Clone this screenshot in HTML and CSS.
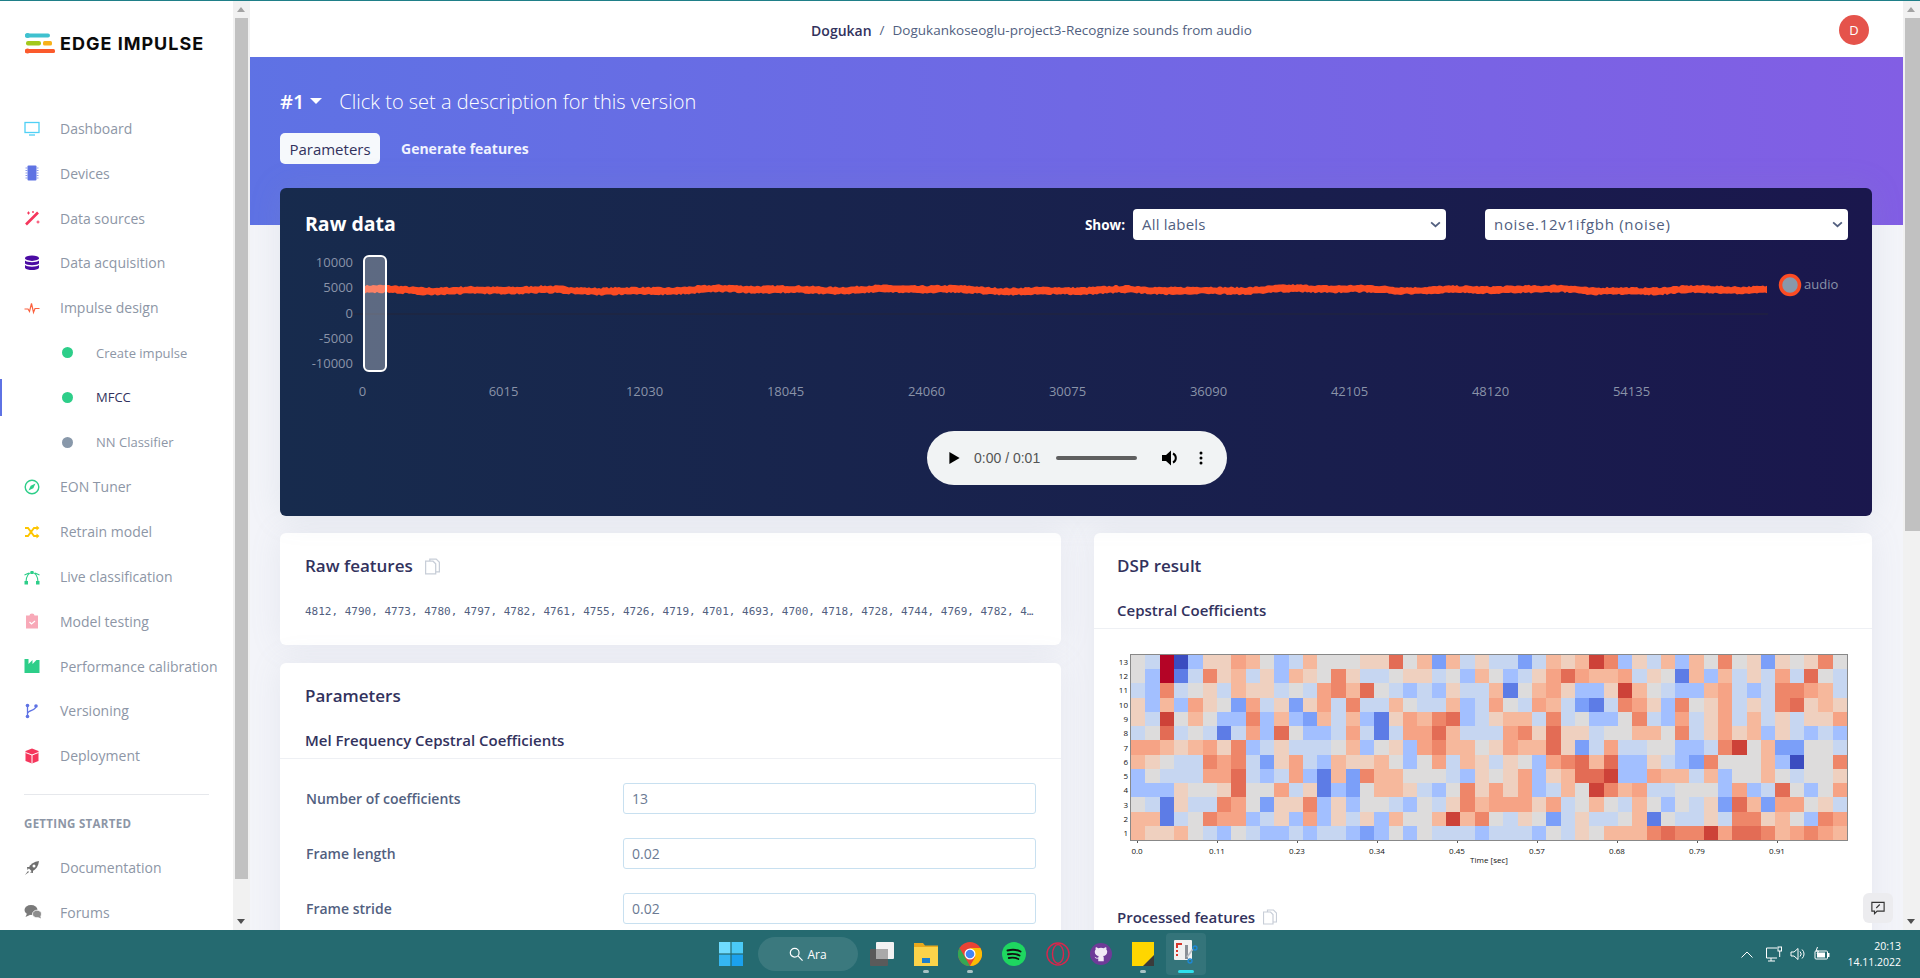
FILE: index.html
```html
<!DOCTYPE html>
<html lang="en">
<head>
<meta charset="utf-8">
<title>Edge Impulse</title>
<link rel="stylesheet" href="styles.css">
</head>
<body>
<div class="app">
  <aside class="sidebar">
    <div class="side-inner">
      <div class="logo">
        <svg class="logo-mark" viewBox="0 0 30 21" width="30" height="21">
          <rect x="0" y="0.5" width="25" height="4" rx="2" fill="#3fc1cf"/>
          <circle cx="2.5" cy="2.5" r="2.5" fill="#3fc1cf"/>
          <rect x="1" y="8" width="15" height="4.5" rx="2" fill="#a3c81c"/>
          <rect x="18" y="8" width="9" height="4.5" rx="1.5" fill="#f7b11a"/>
          <rect x="0" y="16" width="30" height="4" rx="1.5" fill="#fb5a2c"/>
          <circle cx="2.5" cy="18" r="2.5" fill="#fb5a2c"/>
        </svg>
        <span class="logo-text">EDGE IMPULSE</span>
      </div>
      <nav class="nav">
        <a class="nav-item"><svg class="ico" viewBox="0 0 16 16"><rect x="1" y="1.5" width="14" height="10" fill="none" stroke="#4fd0f5" stroke-width="1.3"/><path d="M5 14h6" stroke="#4fd0f5" stroke-width="1.3"/></svg>Dashboard</a>
        <a class="nav-item"><svg class="ico" viewBox="0 0 16 16"><rect x="3.5" y="0.5" width="9" height="15" rx="1" fill="#5f73e3"/><path d="M1.5 3h2M1.5 5.500h2M1.500 8h2M1.500 10.500h2M1.500 13h2M12.500 3h2M12.500 5.500h2M12.500 8h2M12.500 10.500h2M12.500 13h2" stroke="#8d9bea" stroke-width="1"/></svg>Devices</a>
        <a class="nav-item"><svg class="ico" viewBox="0 0 16 16"><path d="M2 14.500 14 2.500" stroke="#f5365c" stroke-width="2.600"/><path d="M3 3h3M4.500 1.500v3M12.500 12h3M14 10.500v3" stroke="#f5365c" stroke-width="1"/><circle cx="9" cy="2" r="0.900" fill="#f5365c"/></svg>Data sources</a>
        <a class="nav-item"><svg class="ico" viewBox="0 0 16 16"><ellipse cx="8" cy="3.200" rx="7" ry="2.700" fill="#4b0ba3"/><path d="M1 5.500c2 2.200 12 2.200 14 0v3c-2 2.200-12 2.200-14 0zM1 10c2 2.200 12 2.200 14 0v3c-2 2.800-12 2.800-14 0z" fill="#4b0ba3"/></svg>Data acquisition</a>
        <a class="nav-item"><svg class="ico" viewBox="0 0 16 16"><path d="M0.500 9h3.500l1.500 2.500 2-8 2 9 1.500-4h4.500" fill="none" stroke="#fb6340" stroke-width="1.200"/></svg>Impulse design</a>
        <a class="nav-item sub"><i class="dot green"></i>Create impulse</a>
        <a class="nav-item sub active"><i class="dot green"></i>MFCC</a>
        <a class="nav-item sub"><i class="dot grey"></i>NN Classifier</a>
        <a class="nav-item"><svg class="ico" viewBox="0 0 16 16"><circle cx="8" cy="8" r="6.800" fill="none" stroke="#2dce89" stroke-width="1.400"/><path d="M11.500 4.500 9.300 9.300 4.500 11.500 6.700 6.700z" fill="#2dce89"/></svg>EON Tuner</a>
        <a class="nav-item"><svg class="ico" viewBox="0 0 16 16"><path d="M1 4h3l6 8h3M1 12h3l6-8h3" fill="none" stroke="#fdc500" stroke-width="1.900"/><path d="m12.500 1.500 3 2.500-3 2.500zM12.500 9.500l3 2.500-3 2.500z" fill="#fdc500"/></svg>Retrain model</a>
        <a class="nav-item"><svg class="ico" viewBox="0 0 16 16"><path d="M2 13C2 7 5 3.500 8 3.500S14 7 14 13M0.500 6 5 4M15.500 6 11 4" fill="none" stroke="#2dce89" stroke-width="1.100"/><rect x="0.500" y="12" width="3.500" height="3.500" fill="#2dce89"/><rect x="12" y="12" width="3.500" height="3.500" fill="#2dce89"/><rect x="6.500" y="2" width="3" height="3" fill="#2dce89"/></svg>Live classification</a>
        <a class="nav-item"><svg class="ico" viewBox="0 0 16 16"><path d="M2 2.500h3.500a2.500 2 0 0 1 5 0H14V15.500H2z" fill="#f8a9b8"/><path d="m5.500 9 2 2 3.500-3" fill="none" stroke="#fff" stroke-width="1.200"/></svg>Model testing</a>
        <a class="nav-item"><svg class="ico" viewBox="0 0 16 16"><path d="M0.500 15V1h4v5l4-4v4l4-4 3 0V15z" fill="#2dce89"/></svg>Performance calibration</a>
        <a class="nav-item"><svg class="ico" viewBox="0 0 16 16"><path d="M3.500 3v10M12 3.500c0 4-8 3.500-8.500 7" fill="none" stroke="#5e72e4" stroke-width="1.300"/><circle cx="3.500" cy="2.500" r="1.800" fill="#5e72e4"/><circle cx="3.500" cy="13.500" r="1.800" fill="#5e72e4"/><circle cx="12" cy="3" r="1.800" fill="#5e72e4"/></svg>Versioning</a>
        <a class="nav-item"><svg class="ico" viewBox="0 0 16 16"><path d="M8 0.500 14.500 3v10L8 15.500 1.500 13V3z" fill="#f5365c"/><path d="M1.500 4.500 8 7l6.500-2.500M8 7v8.500" fill="none" stroke="#fff" stroke-width="1"/></svg>Deployment</a>
        <div class="divider"></div>
        <div class="nav-head">GETTING STARTED</div>
        <a class="nav-item"><svg class="ico" viewBox="0 0 16 16"><path d="M15 1C10 1.500 6.500 4 4.500 8l3.500 3.500C12 9.500 14.500 6 15 1z" fill="#6f6f6f"/><circle cx="10" cy="6" r="1.500" fill="#fff"/><path d="M3 7h3L3.500 10zM9 13v-3l-3 2.500zM1 15l3-4 1 1z" fill="#6f6f6f"/></svg>Documentation</a>
        <a class="nav-item"><svg class="ico chat" viewBox="0 0 18 16"><ellipse cx="7" cy="6" rx="6.500" ry="5" fill="#7a7a7a"/><path d="M3 9.500 1.500 13 7 10.500z" fill="#7a7a7a"/><ellipse cx="13" cy="10" rx="4.500" ry="3.800" fill="#8d8d8d" stroke="#fff" stroke-width="0.800"/><path d="m14 13 3 1.500-1-3z" fill="#8d8d8d"/></svg>Forums</a>
      </nav>
    </div>
    <div class="scrollbar side-scroll"><span class="arrow up"></span><span class="thumb"></span><span class="arrow down"></span></div>
  </aside>

  <div class="content">
    <main class="main">
      <header class="topbar">
        <div class="crumbs"><b>Dogukan</b><span class="sep">/</span><span>Dogukankoseoglu-project3-Recognize sounds from audio</span></div>
        <span class="avatar">D</span>
      </header>
      <section class="hero">
        <div class="version"><span class="ver-no">#1</span><span class="caret"></span><span class="ver-desc">Click to set a description for this version</span></div>
        <div class="tabs"><a class="tab on">Parameters</a><a class="tab">Generate features</a></div>
      </section>
      <div class="body">
        <section class="raw">
          <div class="raw-head">
            <h2>Raw data</h2>
            <div class="raw-controls">
              <label class="show">Show:</label>
              <div class="select s1"><span>All labels</span><svg viewBox="0 0 12 8" width="11" height="7"><path d="m1 1.500 5 4.500 5-4.500" fill="none" stroke="#525f7f" stroke-width="2"/></svg></div>
              <div class="select s2"><span>noise.12v1ifgbh (noise)</span><svg viewBox="0 0 12 8" width="11" height="7"><path d="m1 1.500 5 4.500 5-4.500" fill="none" stroke="#525f7f" stroke-width="2"/></svg></div>
            </div>
          </div>
          <svg id="chart" class="chart" width="1592" height="150" viewBox="0 0 1592 150"></svg>
          <div class="player">
            <svg class="pl-play" viewBox="0 0 12 14" width="11" height="12"><path d="M0 0 12 7 0 14z" fill="#000"/></svg>
            <span class="pl-time">0:00 / 0:01</span>
            <span class="pl-bar"></span>
            <svg class="pl-vol" viewBox="0 0 16 16" width="16" height="16"><path d="M0 5h4l5-4.500v15L4 11H0z" fill="#000"/><path d="M11 3.500a5 5 0 0 1 0 9" fill="none" stroke="#000" stroke-width="2"/></svg>
            <svg class="pl-more" viewBox="0 0 4 14" width="4" height="14"><circle cx="2" cy="2" r="1.500"/><circle cx="2" cy="7" r="1.500"/><circle cx="2" cy="12" r="1.500"/></svg>
          </div>
        </section>
        <div class="cols">
          <div class="col left">
            <section class="card features">
              <h3 class="card-title">Raw features <svg class="copy" viewBox="0 0 14 16" width="15" height="17"><path d="M4.500 3V1h6l3 3v9h-3M0.500 3h7l2.500 2.500V15H.5z" fill="none" stroke="#c8ced8" stroke-width="1.200"/></svg></h3>
              <p class="mono">4812, 4790, 4773, 4780, 4797, 4782, 4761, 4755, 4726, 4719, 4701, 4693, 4700, 4718, 4728, 4744, 4769, 4782, 4…</p>
            </section>
            <section class="card params">
              <h3 class="card-title">Parameters</h3>
              <h4 class="card-sub">Mel Frequency Cepstral Coefficients</h4>
              <div class="rows">
                <div class="row"><label>Number of coefficients</label><div class="input">13</div></div>
                <div class="row"><label>Frame length</label><div class="input">0.02</div></div>
                <div class="row"><label>Frame stride</label><div class="input">0.02</div></div>
              </div>
            </section>
          </div>
          <section class="card dsp">
            <h3 class="card-title">DSP result</h3>
            <h4 class="card-sub">Cepstral Coefficients</h4>
            <div class="plot">
              <div class="plot-y" id="ylabels"></div>
              <div class="plot-main">
                <div class="heat" id="heat"></div>
                <div class="plot-x"><span>0.0</span><span>0.11</span><span>0.23</span><span>0.34</span><span>0.45</span><span>0.57</span><span>0.68</span><span>0.79</span><span>0.91</span></div>
                <div class="plot-label">Time [sec]</div>
              </div>
            </div>
            <h3 class="proc">Processed features <svg class="copy" viewBox="0 0 14 16" width="14" height="16"><path d="M4.500 3V1h6l3 3v9h-3M0.500 3h7l2.500 2.500V15H.5z" fill="none" stroke="#c8ced8" stroke-width="1.200"/></svg></h3>
          </section>
        </div>
      </div>
      <button class="feedback"><svg viewBox="0 0 16 16" width="14" height="14"><path d="M1 1.500h14v10H7l-3 3v-3H1z" fill="none" stroke="#333" stroke-width="1.300"/><path d="m6 8 4-4" stroke="#333" stroke-width="1.300"/></svg></button>
    </main>
    <div class="scrollbar main-scroll"><span class="arrow up"></span><span class="thumb"></span><span class="arrow down"></span></div>
  </div>
</div>

<footer class="taskbar">
  <div class="tb-center">
    <svg class="tb-ico" viewBox="0 0 24 24" width="24" height="24"><rect width="11.400" height="11.400" fill="#6fdcff"/><rect x="12.600" width="11.400" height="11.400" fill="#4bcaf7"/><rect y="12.600" width="11.400" height="11.400" fill="#35b6f2"/><rect x="12.600" y="12.600" width="11.400" height="11.400" fill="#1ba1ee"/></svg>
    <div class="tb-search"><svg viewBox="0 0 16 16" width="14" height="14"><circle cx="6.500" cy="6.500" r="5" fill="none" stroke="#fff" stroke-width="1.400"/><path d="m10.500 10.500 5 5" stroke="#fff" stroke-width="1.400"/></svg>Ara</div>
    <svg class="tb-ico" viewBox="0 0 24 24" width="24" height="24"><rect y="7" width="18" height="17" rx="1" fill="#5a5a5a"/><rect x="6" y="0" width="18" height="17" rx="1" fill="#f2f2f2"/><rect x="6" y="7" width="12" height="10" fill="#a9a9a9"/></svg>
    <span class="tb-slot"><svg viewBox="0 0 24 24" width="24" height="24"><path d="M0 1h9l2 2.500h13V22H0z" fill="#e9a91c"/><rect y="5" width="24" height="19" fill="#fcd34a"/><path d="M8 16h8v5H8z" fill="#1d7fcd"/></svg><i class="pip"></i></span>
    <span class="tb-slot"><svg viewBox="0 0 24 24" width="24" height="24"><circle cx="12" cy="12" r="12" fill="#ea4335"/><path d="M12 24A12 12 0 0 1 1.600 6l5.200 9z" fill="#34a853"/><path d="M12 24a12 12 0 0 0 10.400-18L12 6l5.200 9z" fill="#fbbc05"/><circle cx="12" cy="12" r="5.500" fill="#fff"/><circle cx="12" cy="12" r="4.300" fill="#4285f4"/></svg><i class="pip"></i></span>
    <svg class="tb-ico" viewBox="0 0 24 24" width="24" height="24"><circle cx="12" cy="12" r="12" fill="#1ed760"/><path d="M5.500 8.500c4-1 9-1 13 1M6 12.300c4-.8 8-.6 11.500 1.200M6.800 16c3-.6 6.500-.5 9.500 1" fill="none" stroke="#111" stroke-width="1.900" stroke-linecap="round"/></svg>
    <svg class="tb-ico" viewBox="0 0 24 24" width="24" height="24"><circle cx="12" cy="12" r="11" fill="none" stroke="#d8264c" stroke-width="1.400"/><ellipse cx="12" cy="12" rx="5.500" ry="9.500" fill="none" stroke="#d8264c" stroke-width="1.400"/></svg>
    <svg class="tb-ico" viewBox="0 0 24 24" width="22" height="24"><circle cx="12" cy="12" r="12" fill="#6e3b98"/><path d="M9 20v-3c-3 .6-3.500-1.400-4-2 1 0 1.800 1.600 4 1 0-1 .3-1.400.7-1.800-2.500-.4-4.500-1.500-4.500-4.700 0-1 .4-1.800 1-2.500-.2-.6-.3-1.500.1-2.500 1 0 2 .6 2.700 1.100a9 9 0 0 1 6 0c.7-.5 1.700-1.100 2.700-1.100.4 1 .3 1.900.1 2.500.6.700 1 1.500 1 2.500 0 3.200-2 4.300-4.500 4.700.5.500.7 1.100.7 1.900V20z" fill="#f0e9f5"/></svg>
    <span class="tb-slot"><svg viewBox="0 0 22 24" width="22" height="24"><rect width="22" height="24" fill="#ffd600"/><path d="M11 24 22 13v11z" fill="#3b3b3b"/></svg><i class="pip"></i></span>
    <span class="tb-active"><svg viewBox="0 0 24 24" width="24" height="24"><rect width="18" height="20" rx="1" fill="#f1f1f1"/><path d="M2 3h6v2H4v3H2zM2 10h2v2H2zM2 14h2v2H2z" fill="#d9362a"/><rect x="11" y="5" width="3" height="14" fill="#8a8f96"/><path d="m13 17 6-8" stroke="#b7bdc4" stroke-width="1.500"/><circle cx="21" cy="8" r="2" fill="none" stroke="#1e88d6" stroke-width="1.300"/><circle cx="16" cy="21" r="2" fill="none" stroke="#1e88d6" stroke-width="1.300"/></svg><i class="pip-on"></i></span>
  </div>
  <div class="tray">
    <svg viewBox="0 0 12 7" width="12" height="7"><path d="m.5 6.500 5.500-5.500 5.500 5.500" fill="none" stroke="#fff" stroke-width="1"/></svg>
    <svg viewBox="0 0 16 16" width="16" height="16"><path d="M11 2H.5v10H11M5 12v3M2 15h7" fill="none" stroke="#fff" stroke-width="1"/><rect x="12" y="1" width="3.500" height="4" fill="none" stroke="#fff"/><path d="M13.700 5v6" stroke="#fff"/></svg>
    <svg viewBox="0 0 16 16" width="16" height="16"><path d="M1 6h3l4-3.500v11L4 10H1z" fill="none" stroke="#fff" stroke-width="1"/><path d="M10 5.500a3.500 3.500 0 0 1 0 5M12 3.500a6 6 0 0 1 0 9" fill="none" stroke="#fff" stroke-width="1"/></svg>
    <svg viewBox="0 0 16 16" width="16" height="16"><rect x="1" y="5" width="12.500" height="8" rx="1" fill="none" stroke="#fff" stroke-width="1"/><rect x="3" y="6.500" width="8" height="5" fill="#fff"/><rect x="14" y="7" width="1.500" height="4" fill="#fff"/><path d="M3.500 1 2 5h2.500L3 8" fill="none" stroke="#fff" stroke-width="1"/></svg>
    <div class="clock"><span>20:13</span><span>14.11.2022</span></div>
  </div>
</footer>
<script src="app.js"></script>
</body>
</html>
```
FILE: styles.css
```css
* { box-sizing: border-box; }
html, body { margin: 0; height: 100%; overflow: hidden; }
body { font-family: "Open Sans", sans-serif; font-size: 14px; color: #525f7f; background: #fff; display: flex; flex-direction: column; height: 978px; border-top: 1px solid #1f7f88; }
h2, h3, h4, p { margin: 0; }

.app { flex: 0 0 929px; display: flex; min-height: 0; }

.sidebar { flex: 0 0 250px; display: flex; background: #fff; }
.side-inner { flex: 1; min-width: 0; position: relative; }
.logo { display: flex; align-items: center; gap: 5px; padding: 32px 0 0 25px; height: 53px; }
.logo-text { font-family: "Inter", sans-serif; font-weight: 700; font-size: 18px; color: #0b0b0b; letter-spacing: 1px; white-space: nowrap; }

.nav { padding-top: 52.200px; }
.nav-item { display: flex; align-items: center; height: 44.800px; padding-left: 24px; color: #8d96a6; font-size: 14px; white-space: nowrap; position: relative; }
.ico { flex: 0 0 16px; width: 16px; height: 16px; margin-right: 20px; }
.ico.chat { width: 18px; flex-basis: 18px; margin-right: 18px; }
.nav-item.sub { padding-left: 62px; font-size: 13px; }
.nav-item.sub.active { color: #32325d; }
.nav-item.sub.active::before { content: ""; position: absolute; left: 0; top: 4px; bottom: 4px; width: 2px; background: #5e72e4; }
.dot { width: 11px; height: 11px; border-radius: 50%; margin-right: 23px; }
.dot.green { background: #2dce89; }
.dot.grey { background: #8898aa; }
.divider { height: 1px; background: #e6e8ec; margin: 16px 0 0 24px; width: 185px; }
.nav-head { font-size: 11.500px; font-weight: 700; color: #8d96a6; padding: 21px 0 14px 24px; letter-spacing: .3px; }

.scrollbar { flex: 0 0 17px; background: #f1f1f1; position: relative; display: flex; flex-direction: column; }
.scrollbar .thumb { display: block; background: #c1c1c1; margin: 0 2px; }
.arrow { flex: 0 0 17px; display: block; position: relative; }
.arrow::after { content: ""; position: absolute; left: 4px; top: 6px; border: 4px solid transparent; }
.arrow.up::after { border-bottom: 5px solid #a3a3a3; border-top: 0; }
.arrow.down::after { border-top: 5px solid #505050; border-bottom: 0; }
.side-scroll .thumb { flex: 0 0 861px; }
.side-scroll .arrow.down { margin-top: auto; }
.main-scroll .thumb { flex: 0 0 513px; margin-right: 0; margin-left: 2px; }
.main-scroll .arrow.down { margin-top: auto; }

.content { flex: 1; min-width: 0; display: flex; }
.main { flex: 1; min-width: 0; background: #f3f4f9; position: relative; overflow: hidden; }

.topbar { height: 56px; background: #fff; display: flex; align-items: center; justify-content: center; position: relative; font-size: 13.500px; color: #525f7f; padding: 2px 90px 0 0; }
.crumbs { display: flex; gap: 8px; }
.crumbs b { font-weight: 600; color: #32325d; font-size: 14px; }
.avatar { position: absolute; right: 34px; top: 14px; width: 30px; height: 30px; border-radius: 50%; background: #e5534b; color: #fff; font-size: 13px; display: flex; align-items: center; justify-content: center; }

.hero { height: 168px; background: linear-gradient(87deg, #5e72e4, #825ee4); padding: 27px 30px 0; color: #fff; }
.version { display: flex; align-items: center; height: 34px; font-size: 20px; }
.ver-no { font-weight: 600; }
.caret { width: 0; height: 0; border: 6px solid transparent; border-top: 6px solid #fff; border-bottom: 0; margin: 0 17px 0 6px; }
.ver-desc { font-weight: 300; font-size: 20px; }
.tabs { display: flex; gap: 5px; margin-top: 15px; }
.tab { height: 31px; padding: 0 16px 0 16px; font-size: 14px; display: flex; align-items: center; font-weight: 700; color: #f1f3ff; border-radius: 5px; }
.tab.on { background: #f6f9fc; color: #32325d; font-weight: 400; font-size: 15px; padding: 0 9px; width: 100px; justify-content: center; }

.body { padding: 0 31px 0 30px; margin-top: -37px; }
.raw { background: linear-gradient(87deg, #172b4d, #1a174d); border-radius: 6px; height: 328px; position: relative; padding: 0; box-shadow: 0 0 2rem 0 rgba(136,152,170,.15); }
.raw-head { display: flex; align-items: flex-start; justify-content: space-between; padding: 21px 24px 0 25px; height: 66px; }
.raw-head h2 { color: #fff; font-size: 19.500px; font-weight: 700; line-height: 30px; margin-top: 0; }
.raw-controls { display: flex; align-items: center; }
.show { color: #fff; font-weight: 700; font-size: 13.500px; margin-right: 8px; }
.select { height: 31px; background: #fff; border-radius: 4px; font-size: 15px; color: #525f7f; display: flex; align-items: center; justify-content: space-between; padding: 0 5px 0 9px; }
.select span { margin-top: -2px; }
.s1 { width: 313px; margin-right: 39px; letter-spacing: .2px; }
.s2 { width: 363px; letter-spacing: .7px; }
.chart { display: block; margin-top: -1px; }
.chart text { font-family: "Open Sans", sans-serif; font-size: 13px; fill: #8a93a8; }

.player { position: absolute; left: 647px; top: 243px; width: 300px; height: 54px; background: #f1f3f4; border-radius: 27px; display: flex; align-items: center; font-family: "Liberation Sans", sans-serif; font-size: 14px; padding-left: 22px; }
.pl-play { margin-right: 14px; }
.pl-time { margin-right: 17px; width: 65px; color: #555; white-space: nowrap; }
.pl-bar { width: 81px; height: 4px; border-radius: 2px; background: #5f5f5f; margin-right: 25px; }
.pl-vol { margin-right: 21px; }

.cols { display: grid; grid-template-columns: 781px 778px; gap: 0 33px; margin-top: 17px; }
.col { display: flex; flex-direction: column; gap: 18px; }
.card { background: #fff; border-radius: 6px; box-shadow: 0 0 2rem 0 rgba(136,152,170,.12); }
.card-title { font-size: 17px; font-weight: 600; color: #32325d; padding: 20px 25px 0; line-height: 26px; display: flex; align-items: center; gap: 12px; }
.features { height: 112px; }
.mono { font-family: "DejaVu Sans Mono", monospace; font-size: 11px; color: #525f7f; padding: 26px 25px 0; white-space: nowrap; }
.card-sub { font-size: 15px; font-weight: 600; color: #32325d; padding: 20px 25px 7px; line-height: 22px; border-bottom: 1px solid #eef0f4; }
.rows { padding: 24px 25px 0 26px; }
.row { display: flex; align-items: center; height: 31px; margin-bottom: 24px; }
.row label { flex: 0 0 317px; font-size: 14px; font-weight: 600; color: #525f7f; }
.input { flex: 1; height: 31px; border: 1px solid #c8e0f0; border-radius: 3px; font-size: 14px; padding: 0 8px; display: flex; align-items: center; color: #6b7a93; }
.params { height: 500px; }
.dsp { height: 500px; }
.dsp .card-title, .dsp .card-sub { padding-left: 23px; }
.plot { display: flex; padding: 25px 0 0 24px; }
.plot-y { width: 12px; height: 186px; display: flex; flex-direction: column; font-size: 8px; color: #111; text-align: right; padding-right: 2px; }
.plot-y span { flex: 1; display: flex; align-items: center; justify-content: flex-end; }
.plot-main { width: 718px; }
.heat { display: grid; grid-template-columns: repeat(50, 1fr); grid-template-rows: repeat(13, 1fr); height: 187px; border: 1px solid #888; filter: blur(.35px); }
.plot-x { display: grid; grid-template-columns: repeat(9, 80px); font-size: 8px; color: #111; height: 13px; padding-top: 4px; margin-left: -33px; text-align: center; }
.plot-x span { position: relative; }
.plot-x span::before { content: ""; position: absolute; left: 50%; top: -4px; width: 1px; height: 2px; background: #555; }
.plot-label { font-size: 8px; color: #111; text-align: center; }
.proc { font-size: 15px; font-weight: 600; color: #32325d; padding: 41px 23px 0; display: flex; align-items: center; gap: 8px; line-height: 22px; }

.l-a { background: #3b4cc0; } .l-b { background: #5d7ce6; } .l-c { background: #7b9ff9; }
.l-d { background: #a2bfff; } .l-e { background: #c6d6f1; } .l-f { background: #dddcdc; }
.l-g { background: #efd0bf; } .l-h { background: #f6b89c; } .l-i { background: #f6a385; }
.l-j { background: #ee8669; } .l-k { background: #e36c55; } .l-l { background: #cd4238; }
.l-m { background: #b40426; }

.feedback { position: absolute; right: 10px; top: 892px; width: 30px; height: 30px; background: #ececef; border: 0; border-radius: 6px; display: flex; align-items: center; justify-content: center; padding: 0; }

.taskbar { flex: 0 0 48px; background: #256a70; display: grid; grid-template-columns: 1fr auto 1fr; align-items: center; color: #fff; position: relative; }
.tb-center { grid-column: 2; display: flex; align-items: center; gap: 20px; padding-right: 3px; }
.tb-ico { display: block; }
.tb-search { width: 100px; height: 34px; border-radius: 17px; background: rgba(255,255,255,.1); display: flex; align-items: center; justify-content: center; gap: 4px; font-size: 12px; margin: 0 -8px 0 -5px; }
.tb-slot { position: relative; display: block; height: 24px; }
.tb-slot svg, .tb-active svg { display: block; }
.pip { position: absolute; left: 50%; margin-left: -3px; bottom: -7px; width: 6px; height: 3px; border-radius: 2px; background: #a9c3c5; }
.tb-active { position: relative; width: 40px; height: 42px; margin: 0 -8px; background: rgba(255,255,255,.07); border-radius: 4px; display: flex; align-items: center; justify-content: center; padding-bottom: 4px; }
.pip-on { position: absolute; left: 12px; bottom: 2px; width: 16px; height: 3px; border-radius: 2px; background: #2fe0ec; }
.tray { grid-column: 3; display: flex; align-items: center; justify-content: flex-end; gap: 8px; padding-right: 19px; }
.tray svg:first-child { margin-right: 5px; }
.clock { display: flex; flex-direction: column; align-items: flex-end; font-size: 10.500px; line-height: 16px; margin-left: 9px; }
```
FILE: app.js
```js
(function () {
  var rows = [
    "femadggihfdehfffggkfhchegee" + "cehghljdgehdhfjfgcgfgjf",
    "fdmbejghegdhgfjgeefggefdhfd" + "egikihhiegfbhdhegeiekfe",
    "edjefgehggefeijhkfededgeehb" + "fhigddglhfeddhiedejjihe",
    "gdhdigfciegcgiejeehfeehdeif" + "eihecbejigdjfgiegejkghg",
    "gelfhfddjdhdchehdbgihjkdegh" + "hejefddfjediegiehegeggi",
    "efkefebeidkfddeiebeiikheeei" + "jgkggeffhhfjegighdgeded",
    "iihghigjdegeeefhdfgdijhhfgi" + "hhkgceieeffddejlfhccffe",
    "hgfeejijecgiedhgghfdfiehgeg" + "fdijkhkddgedcjfffhdaffj",
    "dfeeeiikedeidbhcjhhfffedgfg" + "idghkklddihhehdffhfeffg",
    "dddgffgkffiegbdcfhhgedfjgig" + "idehfljhieefffdidekfdfi",
    "febgeejifcggjdgdffedfegjhii" + "igiefhfehfdfegckhciifge",
    "hhbefjiidegdidgegdhffhlhjfe" + "gfcegeefhbfeegejjghfdji",
    "hgghfedfeddedeedcdfdfeeedee" + "edfegfhhhjkjjlikkjhijih"
  ];
  var heat = document.getElementById("heat");
  rows.forEach(function (r) {
    for (var i = 0; i < 50; i++) {
      var c = document.createElement("i");
      c.className = "l-" + r.charAt(i);
      heat.appendChild(c);
    }
  });
  var yl = document.getElementById("ylabels");
  for (var n = 13; n >= 1; n--) {
    var s = document.createElement("span");
    s.textContent = n;
    yl.appendChild(s);
  }

  var NS = "http://www.w3.org/2000/svg";
  var chart = document.getElementById("chart");
  function el(name, attrs, text) {
    var e = document.createElementNS(NS, name);
    for (var k in attrs) e.setAttribute(k, attrs[k]);
    if (text !== undefined) e.textContent = text;
    chart.appendChild(e);
    return e;
  }
  var ox = 280, oy = 254;
  ["10000", "5000", "0", "-5000", "-10000"].forEach(function (t, i) {
    el("text", { x: 353 - ox, y: 268 + i * 25.3 - oy, "text-anchor": "end" }, t);
  });
  [0, 6015, 12030, 18045, 24060, 30075, 36090, 42105, 48120, 54135].forEach(function (t, i) {
    el("text", { x: 362.5 - ox + i * 141, y: 397 - oy, "text-anchor": "middle" }, t);
  });
  el("line", { x1: 353 - ox, x2: 1768 - ox, y1: 315 - oy, y2: 315 - oy, stroke: "#23253a", "stroke-width": 1 });

  var seed = 7;
  function rnd() { seed = (seed * 16807) % 2147483647; return seed / 2147483647; }
  var pts = [];
  for (var x = 365; x <= 1768; x += 2) {
    var base = 291 + 0.8 * Math.sin(x / 31) + 0.7 * Math.sin(x / 83 + 1) + .6 * Math.sin(x / 13);
    if (x > 1540 && x < 1590) base -= 2.5 * Math.sin((x - 1540) / 50 * Math.PI);
    pts.push([x, base]);
  }
  var up = pts.map(function (p) { return (p[0] - ox) + "," + (p[1] - oy - 2.8 - rnd() * 1.6).toFixed(1); });
  var dn = pts.slice().reverse().map(function (p) { return (p[0] - ox) + "," + (p[1] - oy + 2.8 + rnd() * 1.6).toFixed(1); });
  el("polygon", { points: up.concat(dn).join(" "), fill: "#fb4b23" });

  el("rect", { x: 364 - ox, y: 257 - oy, width: 22, height: 115, rx: 5, fill: "#fff", "fill-opacity": 0.3, stroke: "#fff", "stroke-width": 2 });
  el("circle", { cx: 1790 - ox, cy: 286 - oy, r: 9.5, fill: "#8898aa", stroke: "#fb4b23", "stroke-width": 3.5 });
  el("text", { x: 1804 - ox, y: 290 - oy }, "audio");
})();
```
